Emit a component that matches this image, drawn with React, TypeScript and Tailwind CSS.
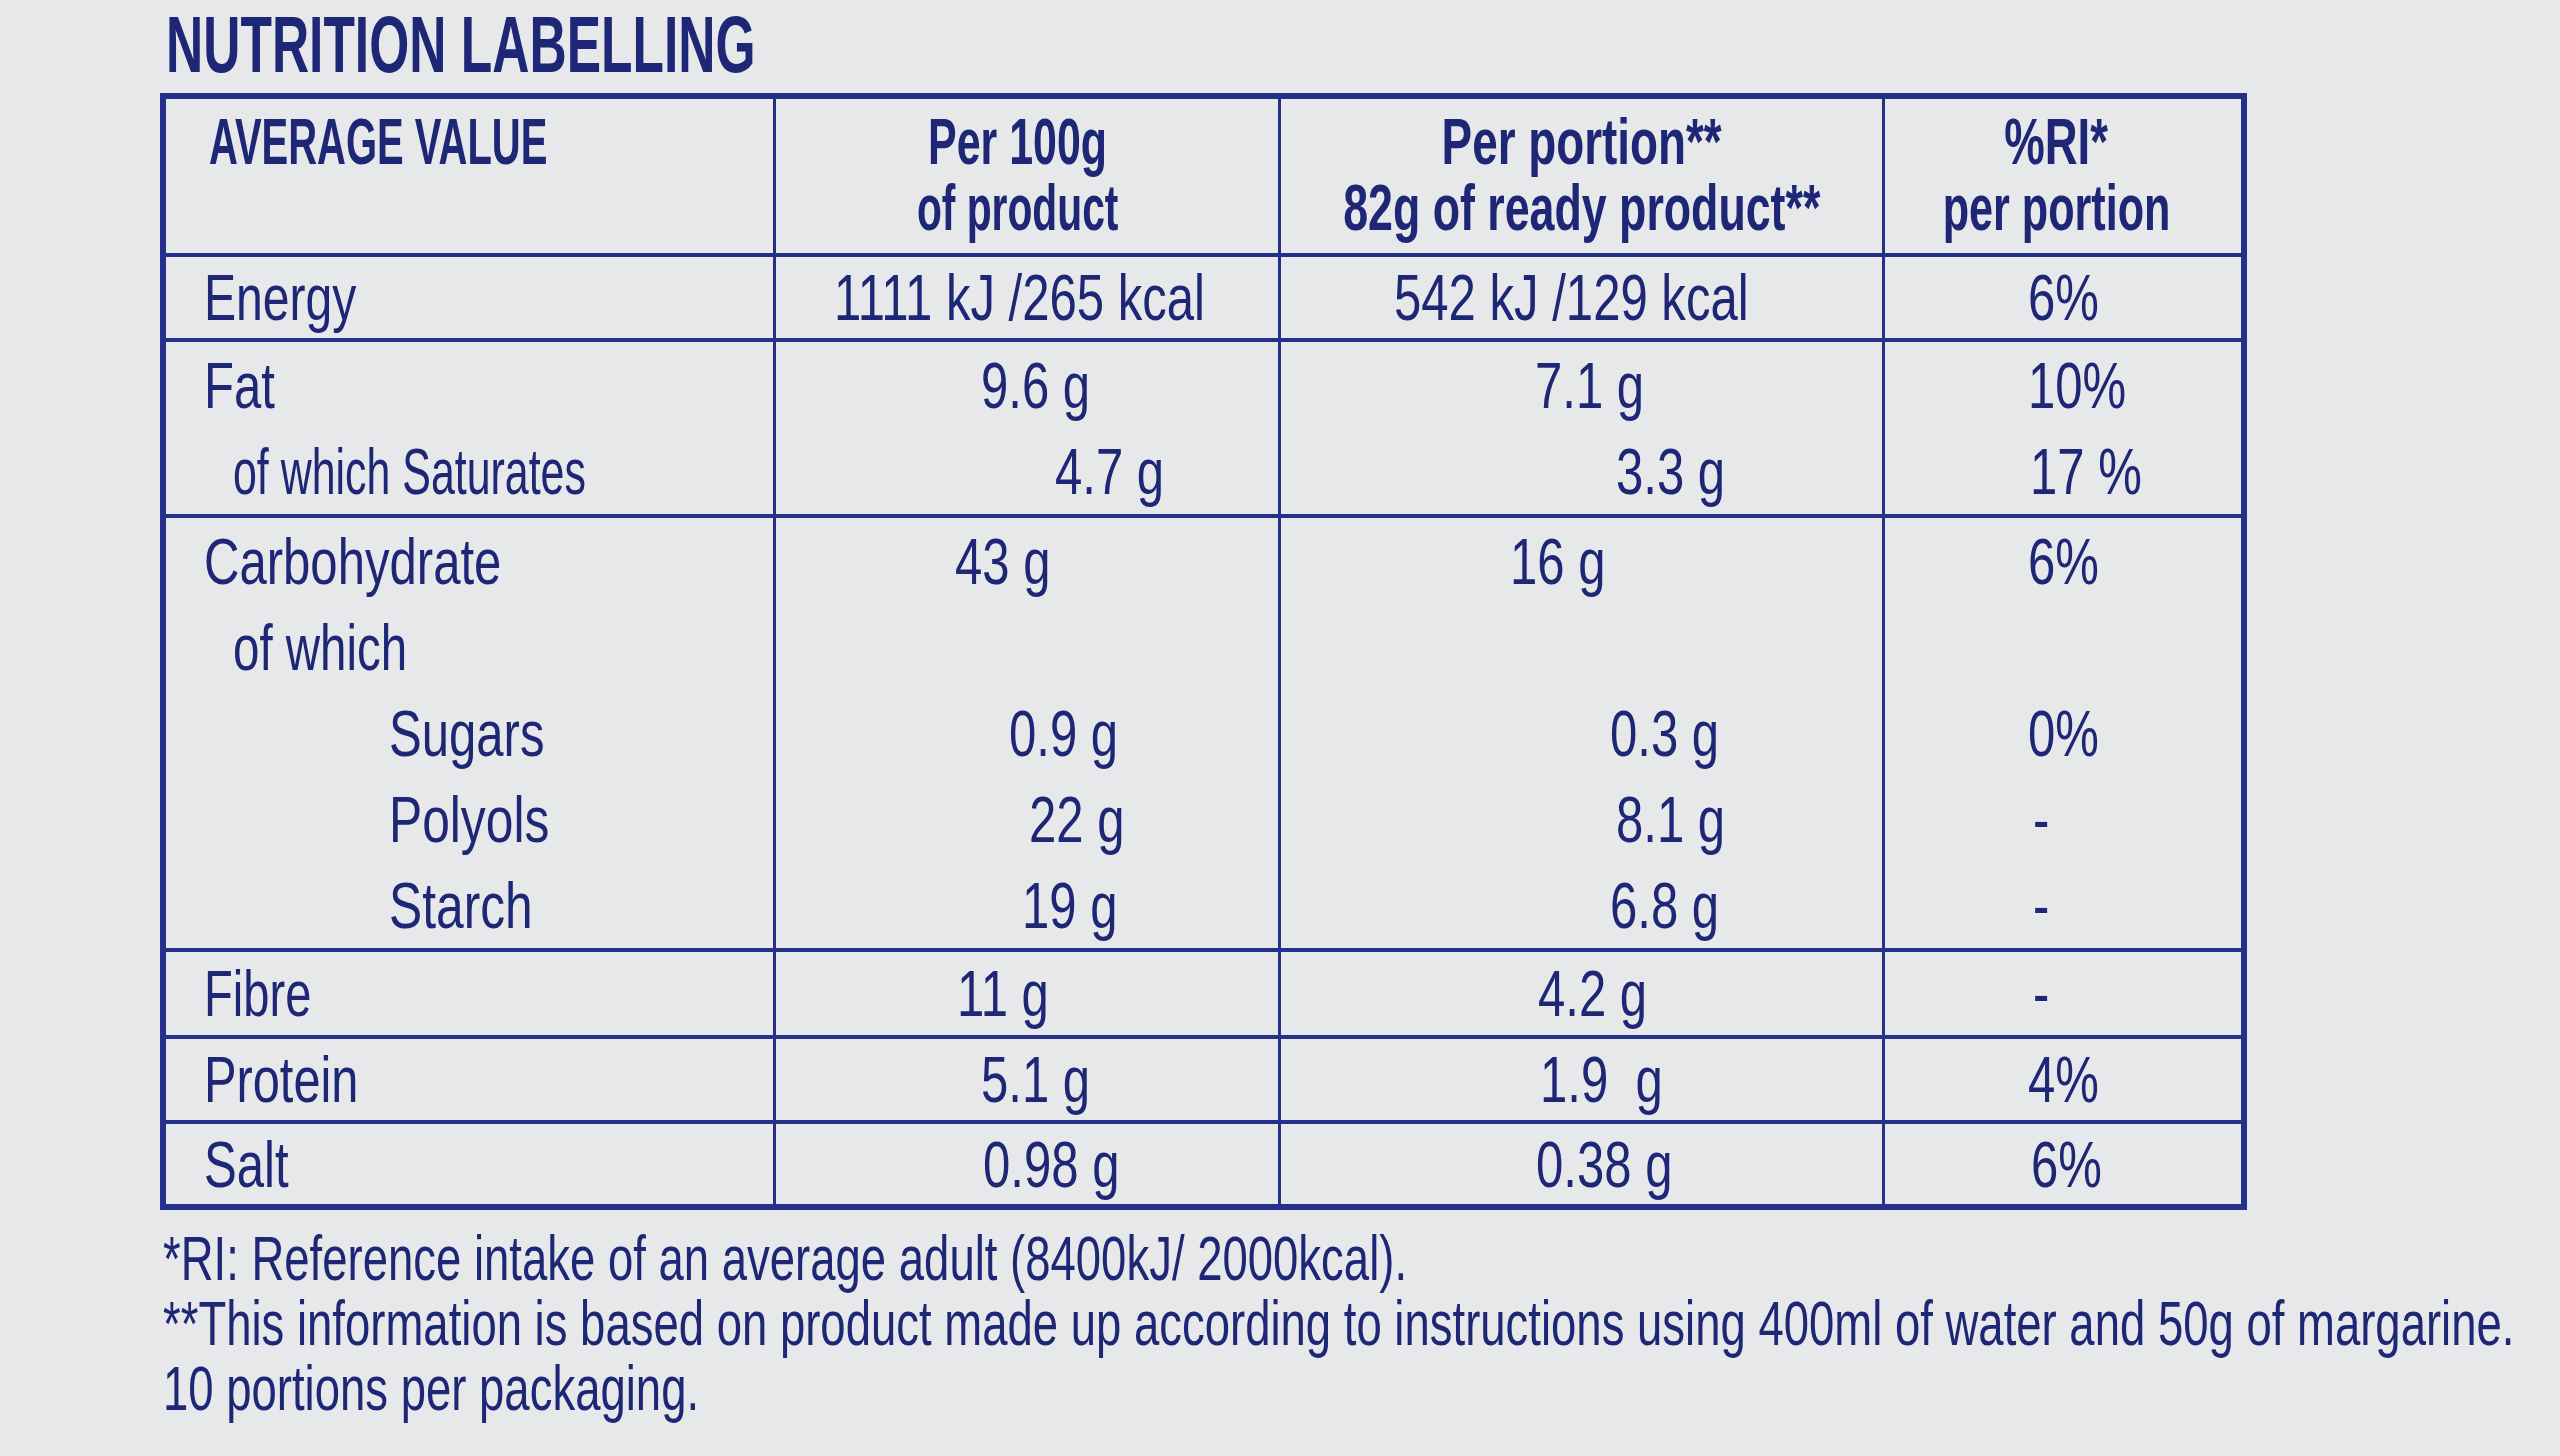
import type React from "react";

type Line = {
  label: string;
  lp: string;
  ls?: string;
  a: string;
  ap: string;
  b: string;
  bp: string;
  c: string;
  cp: string;
};

type RowData = {
  h: string;
  lh: string;
  lines: Line[];
};

const rows: RowData[] = [
  {
    h: "h-[85px]",
    lh: "h-[81px]",
    lines: [
      { label: "Energy", lp: "pl-[38px]", ls: "scale-x-[0.74]", a: "1111 kJ /265 kcal", ap: "pl-[58px]", b: "542 kJ /129 kcal", bp: "pl-[113px]", c: "6%", cp: "pl-[143px]" },
    ],
  },
  {
    h: "h-[176px]",
    lh: "h-[86px]",
    lines: [
      { label: "Fat", lp: "pl-[38px]", a: "9.6 g", ap: "pl-[205px]", b: "7.1 g", bp: "pl-[254px]", c: "10%", cp: "pl-[143px]" },
      { label: "of which Saturates", lp: "pl-[67px]", ls: "scale-x-[0.66]", a: "4.7 g", ap: "pl-[279px]", b: "3.3 g", bp: "pl-[335px]", c: "17 %", cp: "pl-[145px]" },
    ],
  },
  {
    h: "h-[434px]",
    lh: "h-[86px]",
    lines: [
      { label: "Carbohydrate", lp: "pl-[38px]", a: "43 g", ap: "pl-[179px]", b: "16 g", bp: "pl-[229px]", c: "6%", cp: "pl-[143px]" },
      { label: "of which", lp: "pl-[67px]", ls: "scale-x-[0.73]", a: "", ap: "", b: "", bp: "", c: "", cp: "" },
      { label: "Sugars", lp: "pl-[223px]", a: "0.9 g", ap: "pl-[233px]", b: "0.3 g", bp: "pl-[329px]", c: "0%", cp: "pl-[143px]" },
      { label: "Polyols", lp: "pl-[223px]", ls: "scale-x-[0.765]", a: "22 g", ap: "pl-[253px]", b: "8.1 g", bp: "pl-[335px]", c: "-", cp: "pl-[148px]" },
      { label: "Starch", lp: "pl-[223px]", ls: "scale-x-[0.765]", a: "19 g", ap: "pl-[246px]", b: "6.8 g", bp: "pl-[329px]", c: "-", cp: "pl-[148px]" },
    ],
  },
  {
    h: "h-[87px]",
    lh: "h-[83px]",
    lines: [
      { label: "Fibre", lp: "pl-[38px]", ls: "scale-x-[0.725]", a: "11 g", ap: "pl-[181px]", b: "4.2 g", bp: "pl-[257px]", c: "-", cp: "pl-[148px]" },
    ],
  },
  {
    h: "h-[85px]",
    lh: "h-[81px]",
    lines: [
      { label: "Protein", lp: "pl-[38px]", ls: "scale-x-[0.75]", a: "5.1 g", ap: "pl-[205px]", b: "1.9  g", bp: "pl-[259px]", c: "4%", cp: "pl-[143px]" },
    ],
  },
  {
    h: "h-[80px]",
    lh: "h-[80px]",
    lines: [
      { label: "Salt", lp: "pl-[38px]", a: "0.98 g", ap: "pl-[207px]", b: "0.38 g", bp: "pl-[255px]", c: "6%", cp: "pl-[146px]" },
    ],
  },
];

function Txt({ children, scale }: { children: React.ReactNode; scale?: string }) {
  return (
    <span className={`inline-block origin-left whitespace-pre leading-none ${scale ?? "scale-x-[0.755]"}`}>
      {children}
    </span>
  );
}

function Head({ children, scale }: { children: React.ReactNode; scale: string }) {
  return <span className={`inline-block origin-center whitespace-pre ${scale}`}>{children}</span>;
}

function Cell({
  lines,
  lh,
  pick,
  border,
}: {
  lines: Line[];
  lh: string;
  pick: (l: Line) => [string, string, string | undefined];
  border: boolean;
}) {
  return (
    <div className={`flex flex-col ${border ? "border-r-[3px] border-[#25308a]" : ""}`}>
      {lines.map((l, i) => {
        const [text, pad, scale] = pick(l);
        return (
          <div key={i} className={`flex items-center ${lh} ${pad}`}>
            {text && <Txt scale={scale}>{text}</Txt>}
          </div>
        );
      })}
    </div>
  );
}

export default function App() {
  return (
    <div className="h-[1456px] w-full overflow-hidden bg-[#e7e8ea] pl-[160px] font-['Liberation_Sans',Arial,sans-serif] text-[#1e2676]">
      <h1 className="pl-[6px] pt-[5px] text-[80px] font-bold leading-[80px]">
        <span className="inline-block origin-left scale-x-[0.644] whitespace-nowrap">
          NUTRITION LABELLING
        </span>
      </h1>

      <div className="mt-[8px] w-[2087px] border-[6px] border-[#25308a]">
        <div className="grid h-[158px] grid-cols-[610px_505px_604px_1fr] border-b-4 border-[#25308a] text-[65px] font-bold leading-[66px]">
          <div className="border-r-[3px] border-[#25308a] pl-[43px] pt-[10px]">
            <span className="inline-block origin-left scale-x-[0.615] whitespace-nowrap">
              AVERAGE VALUE
            </span>
          </div>
          <div className="flex flex-col items-center border-r-[3px] border-[#25308a] pr-[18px] pt-[10px]">
            <Head scale="scale-x-[0.66]">Per 100g</Head>
            <Head scale="scale-x-[0.627]">of product</Head>
          </div>
          <div className="flex flex-col items-center border-r-[3px] border-[#25308a] pt-[10px]">
            <Head scale="scale-x-[0.705]">Per portion**</Head>
            <Head scale="scale-x-[0.688]">82g of ready product**</Head>
          </div>
          <div className="flex flex-col items-center pr-[16px] pt-[10px]">
            <Head scale="scale-x-[0.70]">%RI*</Head>
            <Head scale="scale-x-[0.664]">per portion</Head>
          </div>
        </div>

        {rows.map((r, i) => (
          <div
            key={i}
            className={`grid grid-cols-[610px_505px_604px_1fr] text-[65px] ${r.h} ${
              i < rows.length - 1 ? "border-b-4 border-[#25308a]" : ""
            }`}
          >
            <Cell lines={r.lines} lh={r.lh} pick={(l) => [l.label, l.lp, l.ls]} border />
            <Cell lines={r.lines} lh={r.lh} pick={(l) => [l.a, l.ap, undefined]} border />
            <Cell lines={r.lines} lh={r.lh} pick={(l) => [l.b, l.bp, undefined]} border />
            <Cell lines={r.lines} lh={r.lh} pick={(l) => [l.c, l.cp, undefined]} border={false} />
          </div>
        ))}
      </div>

      <div className="mt-[16px] pl-[3px] text-[63px] leading-[65px]">
        <div>
          <span className="inline-block origin-left scale-x-[0.722] whitespace-nowrap">
            *RI: Reference intake of an average adult (8400kJ/ 2000kcal).
          </span>
        </div>
        <div>
          <span className="inline-block origin-left scale-x-[0.722] whitespace-nowrap">
            **This information is based on product made up according to instructions using 400ml of water and 50g of margarine.
          </span>
        </div>
        <div>
          <span className="inline-block origin-left scale-x-[0.722] whitespace-nowrap">
            10 portions per packaging.
          </span>
        </div>
      </div>
    </div>
  );
}
